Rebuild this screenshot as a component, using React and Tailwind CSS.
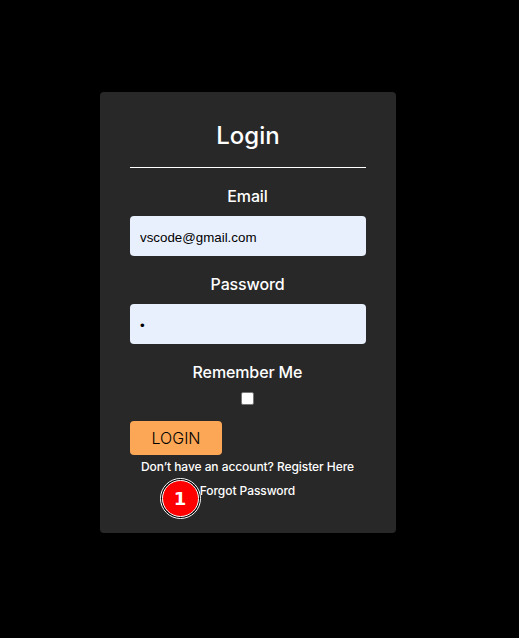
import React from "react";

function Field({ label, id, type, value, className }) {
  return (
    <div className="mt-4 flex flex-col">
      <label htmlFor={id} className="-ml-px text-center text-base leading-6 font-medium tracking-[-0.14px]">
        {label}
      </label>
      <input
        id={id}
        type={type}
        defaultValue={value}
        className={`mt-2 h-10 w-full rounded bg-[#e8f0fe] px-2.5 font-['Liberation_Sans',sans-serif] text-black outline-none ${className}`}
      />
    </div>
  );
}

export default function App() {
  return (
    <main className="h-[638px] w-full overflow-hidden bg-black pt-[92px] pl-[100px] font-['Inter',sans-serif] text-white">
      <form
        className="relative h-[441px] w-[296px] rounded bg-[#282828] p-[30px]"
        onSubmit={(e) => e.preventDefault()}
      >
        <h1 className="h-[46px] border-b border-white text-center text-2xl leading-[27px] font-medium">
          Login
        </h1>
        <Field label="Email" id="email" type="text" value="vscode@gmail.com" className="pt-[3px] text-[13.333px]" />
        <Field label="Password" id="password" type="password" value="1" className="pt-[3px] text-[13.333px]" />
        <div className="mt-4 flex flex-col items-center">
          <label htmlFor="remember" className="-ml-px text-base leading-6 font-medium tracking-[-0.12px]">
            Remember Me
          </label>
          <input
            id="remember"
            type="checkbox"
            className="mt-2 -ml-px size-[13px] appearance-none rounded-[2px] border border-[#767676] bg-white"
          />
        </div>
        <button className="mt-4 block h-[34px] w-[92px] rounded bg-[#fba756] text-base font-light text-black">
          LOGIN
        </button>
        <div className="-ml-px flex flex-col text-center text-xs leading-6 font-medium tracking-[-0.07px]">
          <a href="#register">Don’t have an account? Register Here</a>
          <a href="#forgot">Forgot Password</a>
        </div>
        <span className="absolute top-[385.5px] left-[59.5px] flex size-[41px] items-center justify-center rounded-full border border-white bg-black p-px">
          <span className="flex size-full items-center justify-center rounded-full border border-white bg-[#fe0000] pt-px font-['DejaVu_Sans',sans-serif] text-[18px] leading-none font-bold">
            1
          </span>
        </span>
      </form>
    </main>
  );
}
